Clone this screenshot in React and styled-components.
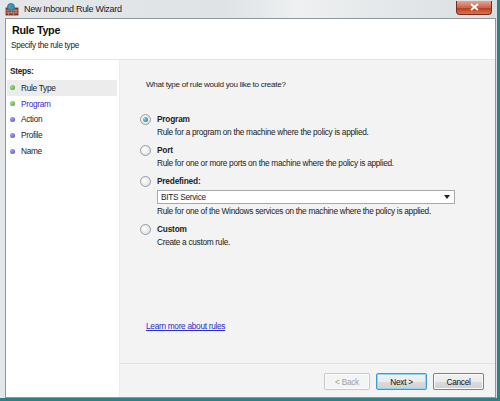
import React from "react";
import styled, { createGlobalStyle } from "styled-components";

const UI_FONT = `"Liberation Sans", Arial, sans-serif`;

const GlobalStyle = createGlobalStyle`
  html, body {
    margin: 0;
    padding: 0;
    background: #fff;
  }
  body {
    font-family: ${UI_FONT};
    font-size: 8.3px;
    letter-spacing: -0.3px;
    color: #1e1e1e;
  }
`;

const steps = [
  { label: "Rule Type", done: true, active: true },
  { label: "Program", done: true, current: true },
  { label: "Action" },
  { label: "Profile" },
  { label: "Name" },
];

const options = [
  {
    key: "program",
    label: "Program",
    text: "Rule for a program on the machine where the policy is applied.",
    checked: true,
  },
  {
    key: "port",
    label: "Port",
    text: "Rule for one or more ports on the machine where the policy is applied.",
  },
  {
    key: "predefined",
    label: "Predefined:",
    text: "Rule for one of the Windows services on the machine where the policy is applied.",
    select: "BITS Service",
  },
  { key: "custom", label: "Custom", text: "Create a custom rule." },
];

const FirewallIcon = () => (
  <svg width="14" height="14" viewBox="0 0 14 14">
    <rect x="1" y="6" width="12" height="7" fill="#9a4a32" stroke="#5e2a1c" strokeWidth="0.8" />
    <path d="M1 8.4h12M1 10.7h12M4 6v2.4M9 6v2.4M6.5 8.4v2.3M11 8.4v2.3M3.5 10.7V13M8.5 10.7V13" stroke="#d7a38c" strokeWidth="0.6" />
    <circle cx="6" cy="5" r="3.6" fill="#3c8fc4" stroke="#1d5d86" strokeWidth="0.6" />
    <path d="M4 3.6c1 -.6 1.8 .4 2.6 .1c.6 .8 -.4 1.6 -1.4 1.7c-.4 .8 -1 1.2 -1.5 .9z" fill="#58b24a" />
  </svg>
);

const App = () => {
  return (
    <>
      <GlobalStyle />
      <Window>
        <TitleBar>
          <FirewallIcon />
          <Title>New Inbound Rule Wizard</Title>
          <CloseButton>
            <svg width="9" height="8" viewBox="0 0 9 8">
              <path d="M1 1L8 7M8 1L1 7" stroke="#fff" strokeWidth="1.8" />
            </svg>
          </CloseButton>
        </TitleBar>
        <Client>
          <Header>
            <HeaderTitle>Rule Type</HeaderTitle>
            <HeaderSub>Specify the rule type</HeaderSub>
          </Header>
          <Main>
            <Sidebar>
              <StepsTitle>Steps:</StepsTitle>
              {steps.map((s) => (
                <StepRow key={s.label} $active={s.active}>
                  <StepDot $done={s.done} />
                  <StepLabel $current={s.current}>{s.label}</StepLabel>
                </StepRow>
              ))}
            </Sidebar>
            <Content>
              <Body>
                <Question>What type of rule would you like to create?</Question>
                <Options>
                  {options.map((o) => (
                    <Option key={o.key}>
                      <Radio $checked={o.checked} />
                      <OptionLabel>{o.label}</OptionLabel>
                      {o.select && (
                        <Select>
                          <span>{o.select}</span>
                          <Caret />
                        </Select>
                      )}
                      <OptionText>{o.text}</OptionText>
                    </Option>
                  ))}
                </Options>
                <LearnMore href="#">Learn more about rules</LearnMore>
              </Body>
              <Footer>
                <Button disabled>&lt; Back</Button>
                <Button $default>Next &gt;</Button>
                <Button>Cancel</Button>
              </Footer>
            </Content>
          </Main>
        </Client>
      </Window>
    </>
  );
};

// Styled Components
const Window = styled.div`
  width: 500px;
  height: 401px;
  box-sizing: border-box;
  display: flex;
  flex-direction: column;
  background: linear-gradient(90deg, #e4e7ea 0%, #dfe3e6 45%, #eef0f1 60%, #d9dee1 100%);
  border-right: 3px solid #2f7f86;
  border-bottom: 3px solid #2f7f86;
  overflow: hidden;
`;

const TitleBar = styled.div`
  height: 18px;
  flex: none;
  display: flex;
  align-items: center;
  padding: 0 4px 0 5px;
  gap: 5px;
`;

const Title = styled.div`
  font-size: 9px;
  color: #1a1a1a;
  flex: 1;
`;

const CloseButton = styled.div`
  width: 34px;
  height: 13px;
  margin-top: -3px;
  margin-right: 1px;
  border: 1px solid #7a2a1c;
  border-top: none;
  border-radius: 0 0 4px 4px;
  background: linear-gradient(180deg, #e9a491 0%, #d1634a 50%, #b73c22 55%, #d77553 100%);
  display: flex;
  align-items: center;
  justify-content: center;
`;

const Client = styled.div`
  flex: 1;
  display: flex;
  flex-direction: column;
  margin: 0 1px 0 5px;
  border: 1px solid #8e979c;
  background: #fff;
  min-height: 0;
`;

const Header = styled.div`
  height: 41px;
  flex: none;
  background: #fff;
  border-bottom: 1px solid #e6e6e6;
  padding: 4px 0 0 5px;
  box-sizing: border-box;
`;

const HeaderTitle = styled.div`
  font-size: 10.8px;
  font-weight: bold;
  color: #111;
  margin: 1px 0 0 1px;
`;

const HeaderSub = styled.div`
  font-size: 8.2px;
  color: #222;
  margin-top: 5px;
`;

const Main = styled.div`
  flex: 1;
  display: flex;
  min-height: 0;
`;

const Sidebar = styled.div`
  width: 114px;
  flex: none;
  background: #fff;
  border-right: 1px solid #ececec;
  padding: 4px 2px 0 1px;
  box-sizing: border-box;
`;

const StepsTitle = styled.div`
  font-weight: bold;
  font-size: 8.3px;
  padding: 2px 0 0 3px;
  height: 16px;
  box-sizing: border-box;
`;

const StepRow = styled.div`
  display: flex;
  align-items: center;
  height: 15.8px;
  padding-left: 3px;
  gap: 6px;
  background: ${(p) => (p.$active ? "#ececec" : "transparent")};
`;

const StepDot = styled.span`
  width: 5px;
  height: 5px;
  border-radius: 50%;
  background: ${(p) =>
    p.$done
      ? "radial-gradient(circle at 35% 35%, #a6e08a, #3f9a2a)"
      : "radial-gradient(circle at 35% 35%, #a9a5ee, #4b43b8)"};
`;

const StepLabel = styled.span`
  font-size: 8.3px;
  color: ${(p) => (p.$current ? "#2d2dd6" : "#222")};
`;

const Content = styled.div`
  flex: 1;
  display: flex;
  flex-direction: column;
  background: #f3f3f3;
  min-width: 0;
`;

const Body = styled.div`
  flex: 1;
  padding: 20px 0 0 20px;
  display: flex;
  flex-direction: column;
`;

const Question = styled.div`
  font-size: 8.1px;
  padding-left: 6px;
`;

const Options = styled.div`
  margin-top: 24px;
  display: flex;
  flex-direction: column;
  gap: 6px;
`;

const Option = styled.div`
  display: grid;
  grid-template-columns: 17px 1fr;
  align-items: center;
  & > *:not(:first-child) {
    grid-column: 2;
  }
`;

const Radio = styled.span`
  width: 9px;
  height: 9px;
  border-radius: 50%;
  border: 1px solid #969da3;
  background: radial-gradient(circle at 40% 40%, #ffffff, #d8dadc);
  position: relative;
  &::after {
    content: "";
    display: ${(p) => (p.$checked ? "block" : "none")};
    position: absolute;
    left: 2px;
    top: 2px;
    width: 5px;
    height: 5px;
    border-radius: 50%;
    background: radial-gradient(circle at 35% 35%, #9bd3f0, #1f5f96);
  }
`;

const OptionLabel = styled.span`
  font-weight: bold;
  font-size: 8.3px;
  letter-spacing: -0.2px;
  line-height: 12px;
`;

const OptionText = styled.div`
  font-size: 8.3px;
  line-height: 11px;
  margin-top: 2px;
  color: #222;
`;

const Select = styled.div`
  margin-top: 3px;
  width: 298px;
  height: 14px;
  box-sizing: border-box;
  border: 1px solid #a4a9ad;
  background: #fff;
  display: flex;
  align-items: center;
  justify-content: space-between;
  padding: 0 4px 0 3px;
  font-size: 8.3px;
`;

const Caret = styled.span`
  width: 0;
  height: 0;
  border-left: 3px solid transparent;
  border-right: 3px solid transparent;
  border-top: 4px solid #222;
`;

const LearnMore = styled.a`
  margin-top: auto;
  margin-bottom: 32px;
  margin-left: 6px;
  font-size: 8.3px;
  color: #2a2ad0;
  text-decoration: underline;
  align-self: flex-start;
`;

const Footer = styled.div`
  height: 34px;
  flex: none;
  border-top: 1px solid #e2e2e2;
  box-sizing: border-box;
  display: flex;
  align-items: center;
  justify-content: flex-end;
  gap: 6px;
  padding: 2px 11px 0 0;
`;

const Button = styled.button`
  width: ${(p) => (p.disabled ? "46px" : "51px")};
  height: 17px;
  font-family: ${UI_FONT};
  font-size: 8.3px;
  letter-spacing: -0.3px;
  border-radius: 2px;
  padding: 0;
  border: 1px solid ${(p) => (p.$default ? "#3c9ccf" : p.disabled ? "#c7c9cb" : "#7c8085")};
  color: ${(p) => (p.disabled ? "#a0a0a0" : "#111")};
  background: ${(p) =>
    p.disabled
      ? "#f4f4f4"
      : "linear-gradient(180deg, #f2f2f2 0%, #ebebeb 50%, #dcdcdc 52%, #cfcfcf 100%)"};
  box-shadow: ${(p) => (p.$default ? "inset 0 0 0 1px #8ed6f6" : "inset 0 0 0 1px #fbfbfb")};
`;

export default App;
